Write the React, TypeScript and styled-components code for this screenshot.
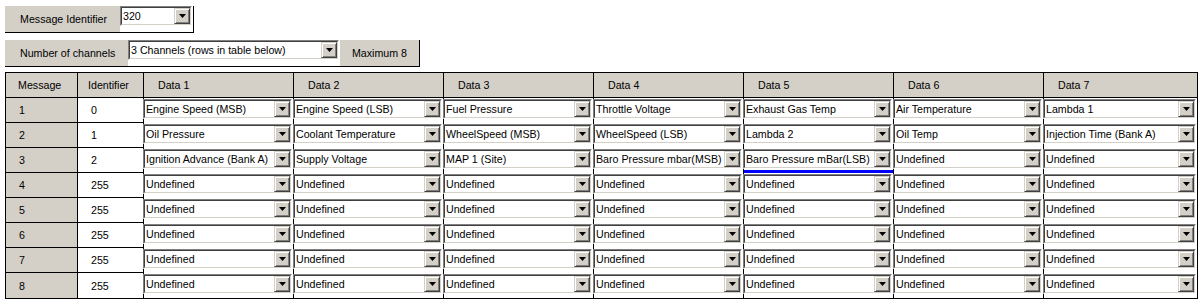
import styled, { createGlobalStyle } from 'styled-components'


const GlobalStyle = createGlobalStyle`
    body {
        margin: 0;
        background: #fff;
        font-family: "Liberation Sans", Arial, sans-serif;
        font-size: 8pt;
        color: #000;
    }
`

const Page = styled.div`
    padding: 6px 5px 0;
`

const PanelBar = styled.div<{ $gap?: number }>`
    display: inline-flex;
    border-right: 1px solid #000;
    border-bottom: 1px solid #000;
    margin-bottom: ${p => p.$gap ?? 7}px;
`

const PanelRow = styled.div``

const Label = styled.div<{ $width: number; $center?: boolean }>`
    width: ${p => p.$width}px;
    height: 26px;
    box-sizing: border-box;
    background: #d4d0c8;
    display: flex;
    align-items: center;
    justify-content: ${p => p.$center ? 'center' : 'flex-start'};
    padding-left: ${p => p.$center ? 0 : 15}px;
    white-space: nowrap;
`

const FieldCell = styled.div<{ $width: number }>`
    width: ${p => p.$width}px;
    height: 26px;
    background: #fff;
    margin-right: 1px;
`

const Combo = styled.div`
    position: relative;
    display: flex;
    height: 20px;
    box-sizing: border-box;
    background: #fff;
    border: 1px solid;
    border-color: #808080 #fff #fff #808080;
`

const ComboInner = styled.div`
    flex: 1;
    display: flex;
    min-width: 0;
    border: 1px solid;
    border-color: #404040 #d4d0c8 #d4d0c8 #404040;
`

const ComboText = styled.span`
    flex: 1;
    min-width: 0;
    padding-left: 1px;
    line-height: 16px;
    white-space: nowrap;
    overflow: hidden;
`

const DropButton = styled.span`
    width: 16px;
    flex: none;
    box-sizing: border-box;
    background: #d4d0c8;
    border: 1px solid;
    border-color: #d4d0c8 #404040 #404040 #d4d0c8;
    box-shadow: inset 1px 1px #fff, inset -1px -1px #808080;
    display: flex;
    align-items: center;
    justify-content: center;

    svg { display: block; }
`

const Grid = styled.table`
    border-collapse: separate;
    border-spacing: 0;
    table-layout: fixed;
    width: 1193px;
    border: 1px solid #000;
`

const HeadCell = styled.th<{ $last?: boolean; $pad?: number }>`
    height: 24px;
    padding: 0 0 0 ${p => p.$pad ?? 12}px;
    background: #d4d0c8;
    font-weight: normal;
    text-align: left;
    border-right: ${p => p.$last ? 'none' : '1px solid #000'};
    border-bottom: 1px solid #000;
    white-space: nowrap;
`

const BodyCell = styled.td<{ $gray?: boolean; $lastRow?: boolean }>`
    height: 24px;
    padding: 0 0 0 13px;
    background: ${p => p.$gray ? '#d4d0c8' : '#fff'};
    border-right: 1px solid #000;
    border-bottom: ${p => p.$lastRow ? 'none' : '1px solid #000'};
`

const DataCell = styled.td<{ $last?: boolean; $focus?: boolean }>`
    height: 24px;
    padding: 1px 1px 0 0;
    vertical-align: top;
    border-right: ${p => p.$last ? 'none' : '1px solid #000'};
    box-shadow: ${p => p.$focus ? 'inset 0 -3px 0 #0000ff' : 'none'};
`

const CellCombo = styled(Combo)`
    margin-left: -1px;
`


function Arrow() {
    return <svg width="7" height="4" viewBox="0 0 7 4">
        <polygon points="0,0 7,0 3.5,4" fill="#000" />
    </svg>
}

function Select({ value }: { value: string }) {
    return <Combo>
        <ComboInner>
            <ComboText>{value}</ComboText>
            <DropButton><Arrow /></DropButton>
        </ComboInner>
    </Combo>
}

function CellSelect({ value }: { value: string }) {
    return <CellCombo>
        <ComboInner>
            <ComboText>{value}</ComboText>
            <DropButton><Arrow /></DropButton>
        </ComboInner>
    </CellCombo>
}


const U = 'Undefined'
const undefinedRow = [U, U, U, U, U, U, U]

const rows: { id: string; data: string[] }[] = [
    { id: '0', data: ['Engine Speed (MSB)', 'Engine Speed (LSB)', 'Fuel Pressure', 'Throttle Voltage', 'Exhaust Gas Temp', 'Air Temperature', 'Lambda 1'] },
    { id: '1', data: ['Oil Pressure', 'Coolant Temperature', 'WheelSpeed (MSB)', 'WheelSpeed (LSB)', 'Lambda 2', 'Oil Temp', 'Injection Time (Bank A)'] },
    { id: '2', data: ['Ignition Advance (Bank A)', 'Supply Voltage', 'MAP 1 (Site)', 'Baro Pressure mbar(MSB)', 'Baro Pressure mBar(LSB)', U, U] },
    { id: '255', data: undefinedRow },
    { id: '255', data: undefinedRow },
    { id: '255', data: undefinedRow },
    { id: '255', data: undefinedRow },
    { id: '255', data: undefinedRow },
]

const colWidths = [72, 66, 150, 150, 150, 150, 150, 150, 153]


export default function App() {
    return <>
        <GlobalStyle />
        <Page>
            <PanelRow>
                <PanelBar>
                    <Label $width={115}>Message Identifier</Label>
                    <FieldCell $width={72}>
                        <Select value="320" />
                    </FieldCell>
                </PanelBar>
            </PanelRow>
            <PanelRow>
                <PanelBar $gap={5}>
                    <Label $width={123}>Number of channels</Label>
                    <FieldCell $width={211}>
                        <Select value="3 Channels (rows in table below)" />
                    </FieldCell>
                    <Label $width={79} $center>Maximum 8</Label>
                </PanelBar>
            </PanelRow>
            <Grid>
                <colgroup>
                    {colWidths.map((w, i) => <col key={i} style={{ width: w }} />)}
                </colgroup>
                <thead>
                    <tr>
                        <HeadCell>Message</HeadCell>
                        <HeadCell $pad={10}>Identifier</HeadCell>
                        {[1, 2, 3, 4, 5, 6, 7].map(n =>
                            <HeadCell key={n} $pad={14} $last={n === 7}>Data {n}</HeadCell>
                        )}
                    </tr>
                </thead>
                <tbody>
                    {rows.map((row, r) =>
                        <tr key={r}>
                            <BodyCell $gray $lastRow={r === rows.length - 1}>{r + 1}</BodyCell>
                            <BodyCell $lastRow={r === rows.length - 1}>{row.id}</BodyCell>
                            {row.data.map((v, c) =>
                                <DataCell key={c} $last={c === 6} $focus={r === 2 && c === 4}>
                                    <CellSelect value={v} />
                                </DataCell>
                            )}
                        </tr>
                    )}
                </tbody>
            </Grid>
        </Page>
    </>
}
